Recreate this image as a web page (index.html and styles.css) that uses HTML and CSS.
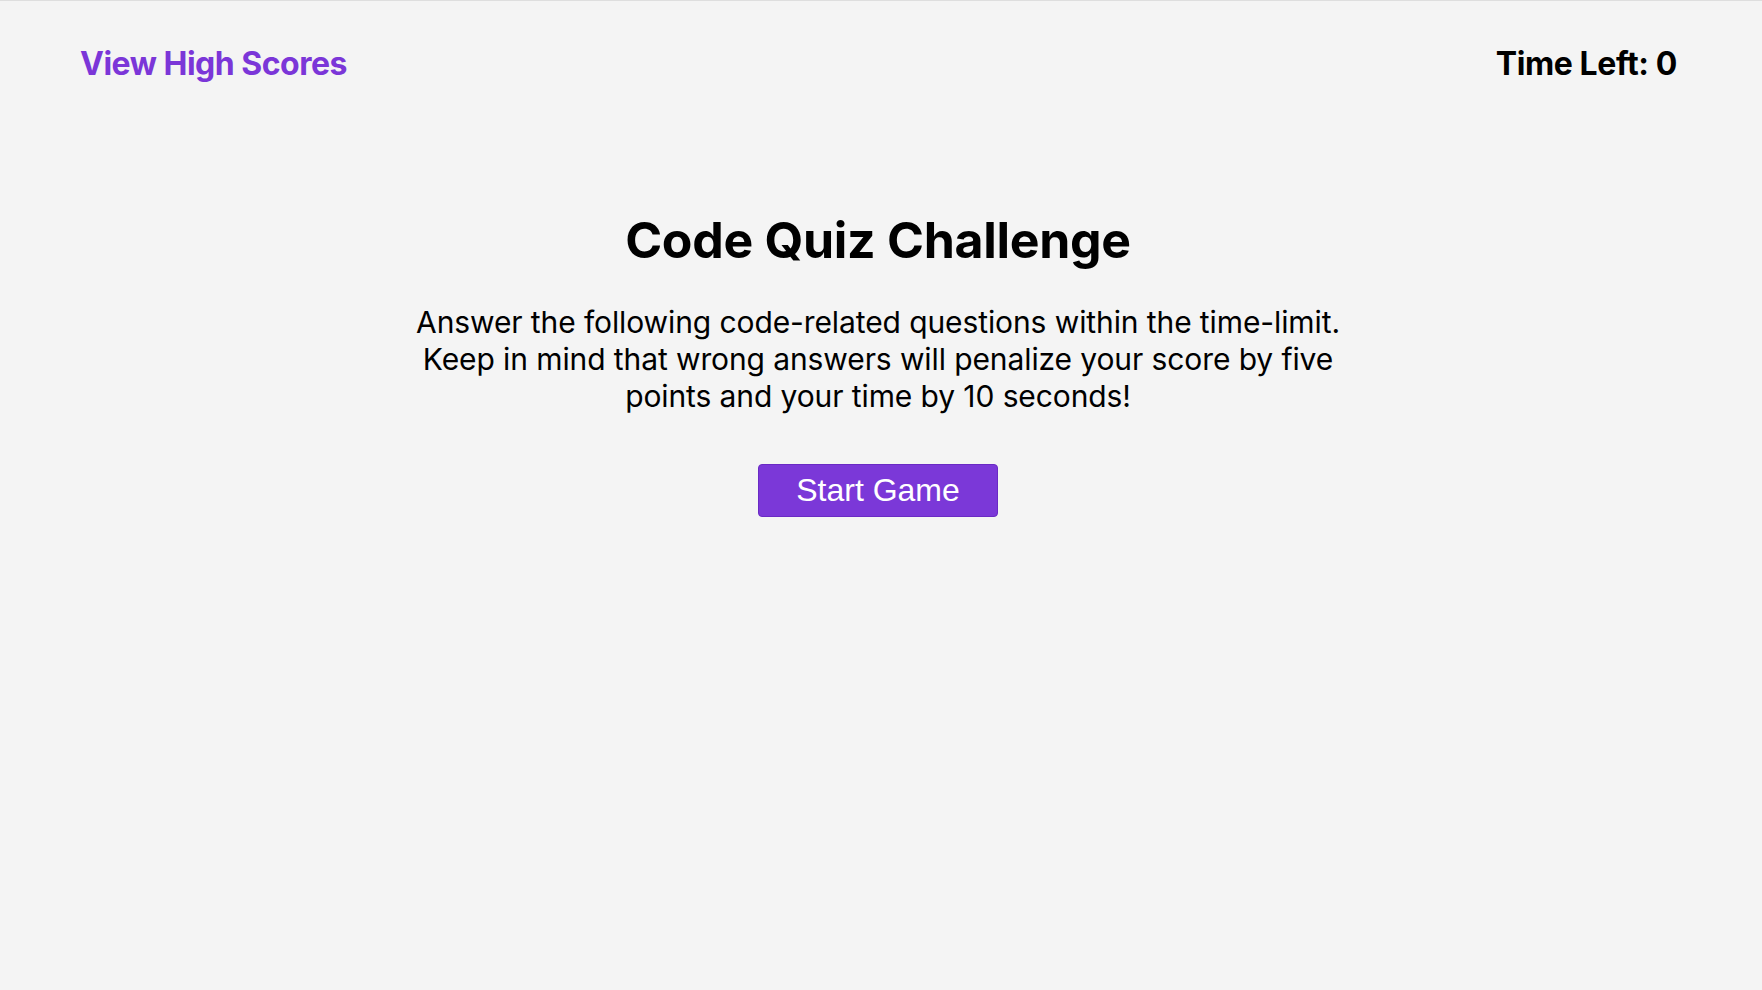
FILE: index.html
```html
<!DOCTYPE html>
<html lang="en">
<head>
<meta charset="utf-8">
<title>Code Quiz</title>
<link rel="stylesheet" href="styles.css">
</head>
<body>
<header class="top-bar">
  <a class="high-scores" href="#">View High Scores</a>
  <div class="timer">Time Left: <span>0</span></div>
</header>
<main class="intro">
  <h1 class="title">Code Quiz Challenge</h1>
  <p class="lead">Answer the following code-related questions within the time-limit. Keep in mind that wrong answers will penalize your score by five points and your time by 10 seconds!</p>
  <button class="start-btn" type="button">Start Game</button>
</main>
</body>
</html>
```

FILE: styles.css
```css
html, body {
  margin: 0;
  padding: 0;
}
body {
  background: #f4f4f4;
  border-top: 1px solid #dedede;
  font-family: Inter, "Noto Sans", sans-serif;
  color: #000;
  min-height: 989px;
  box-sizing: border-box;
}
.top-bar {
  display: flex;
  justify-content: space-between;
  align-items: center;
  padding: 43px 85px 0 80px;
}
.high-scores {
  color: #7b36d8;
  text-decoration: none;
  font-weight: 700;
  font-size: 32px;
  line-height: 40px;
  letter-spacing: -0.5px;
}
.timer {
  font-weight: 700;
  font-size: 32px;
  line-height: 40px;
  letter-spacing: -0.4px;
}
.intro {
  display: flex;
  flex-direction: column;
  align-items: center;
  text-align: center;
  padding: 126px 6px 0 0;
}
.title {
  margin: 0;
  font-size: 50px;
  line-height: 60px;
  font-weight: 700;
  letter-spacing: -0.3px;
}
.lead {
  margin: 34px 0 0;
  width: 945px;
  font-size: 30px;
  line-height: 37px;
  letter-spacing: -0.1px;
}
.start-btn {
  margin-top: 49px;
  width: 240px;
  height: 53px;
  background: #7b38d8;
  border: 1px solid #6a2ac4;
  border-radius: 4px;
  color: #fff;
  font-family: "Liberation Sans", Arial, sans-serif;
  font-size: 32px;
  padding: 0;
}
```
